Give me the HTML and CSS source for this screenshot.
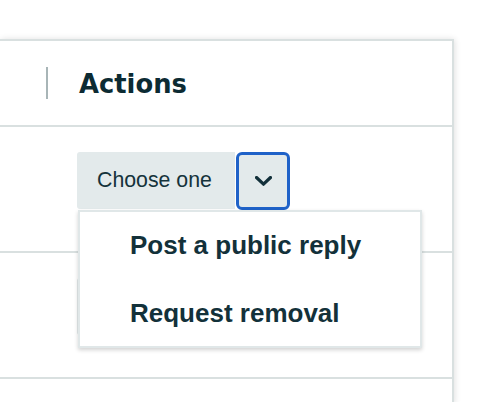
FILE: index.html
```html
<!DOCTYPE html>
<html>
<head>
<meta charset="utf-8">
<link rel="stylesheet" href="styles.css">
</head>
<body>
<div class="page">
  <div class="table">
    <div class="head">
      <span class="sep"></span>
      <span class="th">Actions</span>
    </div>
    <div class="row">
      <div class="select">
        <span class="choose">Choose one</span>
        <button class="toggle" aria-label="Open">
          <svg width="17" height="10" viewBox="0 0 17 10"><path d="M1.5 1.5 L8.5 8.2 L15.5 1.5" fill="none" stroke="#12303a" stroke-width="3.2" stroke-linecap="round" stroke-linejoin="round"/></svg>
        </button>
        <ul class="menu">
          <li>Post a public reply</li>
          <li>Request removal</li>
        </ul>
      </div>
    </div>
    <div class="row">
      <div class="select">
        <span class="choose" aria-hidden="true"></span>
        <span class="toggle plain" aria-hidden="true"></span>
      </div>
    </div>
    <div class="row last"></div>
  </div>
</div>
</body>
</html>
```

FILE: styles.css
```css
html, body {
  margin: 0;
  padding: 0;
  background: #fff;
  overflow: hidden;
}
.page {
  padding-top: 39px;
  width: 490px;
  height: 402px;
  box-sizing: border-box;
}
.table {
  width: 452px;
  border-top: 2px solid #d9e0e0;
  border-right: 2px solid #d9e0e0;
  box-shadow: 1px 0 6px rgba(0, 0, 0, 0.12);
  background: #fff;
}
.head {
  height: 84px;
  display: flex;
  align-items: center;
  border-bottom: 2px solid #d9e0e0;
}
.sep {
  width: 2px;
  height: 32px;
  background: #a8b5b7;
  margin-left: 46px;
}
.th {
  margin-left: 31px;
  padding-top: 2px;
  font-family: "DejaVu Sans", Verdana, sans-serif;
  font-weight: bold;
  font-size: 25.8px;
  color: #0c2b33;
}
.row {
  padding-left: 77px;
  padding-top: 25px;
  box-sizing: border-box;
  height: 126px;
  border-bottom: 2px solid #d9e0e0;
}
.row.last {
  height: 19px;
  border-bottom: none;
}
.select {
  position: relative;
  display: flex;
  align-items: flex-start;
}
.choose {
  display: flex;
  align-items: center;
  height: 57px;
  width: 158px;
  box-sizing: border-box;
  padding-left: 20px;
  background: #e3eaeb;
  border-radius: 3px 0 0 3px;
  font-family: "Liberation Sans", Arial, sans-serif;
  font-size: 21.3px;
  color: #15333b;
}
.toggle {
  margin-left: 1px;
  width: 54px;
  height: 58px;
  box-sizing: border-box;
  border: 3px solid #1f62c8;
  border-radius: 6px;
  background: #e3eaeb;
  display: flex;
  align-items: center;
  justify-content: center;
  padding: 0;
}
.toggle.plain {
  border-color: #e3eaeb;
  border-radius: 0 3px 3px 0;
}
.menu {
  position: absolute;
  left: 1px;
  top: 58px;
  width: 344px;
  margin: 0;
  padding: 0;
  list-style: none;
  background: #fff;
  border: 2px solid #e0e7e8;
  box-sizing: border-box;
  box-shadow: 0 2px 4px rgba(0, 0, 0, 0.18);
  z-index: 2;
}
.menu li {
  padding: 18px 10px 20px 50px;
  font-family: "Liberation Sans", Arial, sans-serif;
  font-weight: bold;
  font-size: 26px;
  line-height: 30px;
  color: #13313a;
}
.menu li:last-child {
  padding-bottom: 18px;
}
```
